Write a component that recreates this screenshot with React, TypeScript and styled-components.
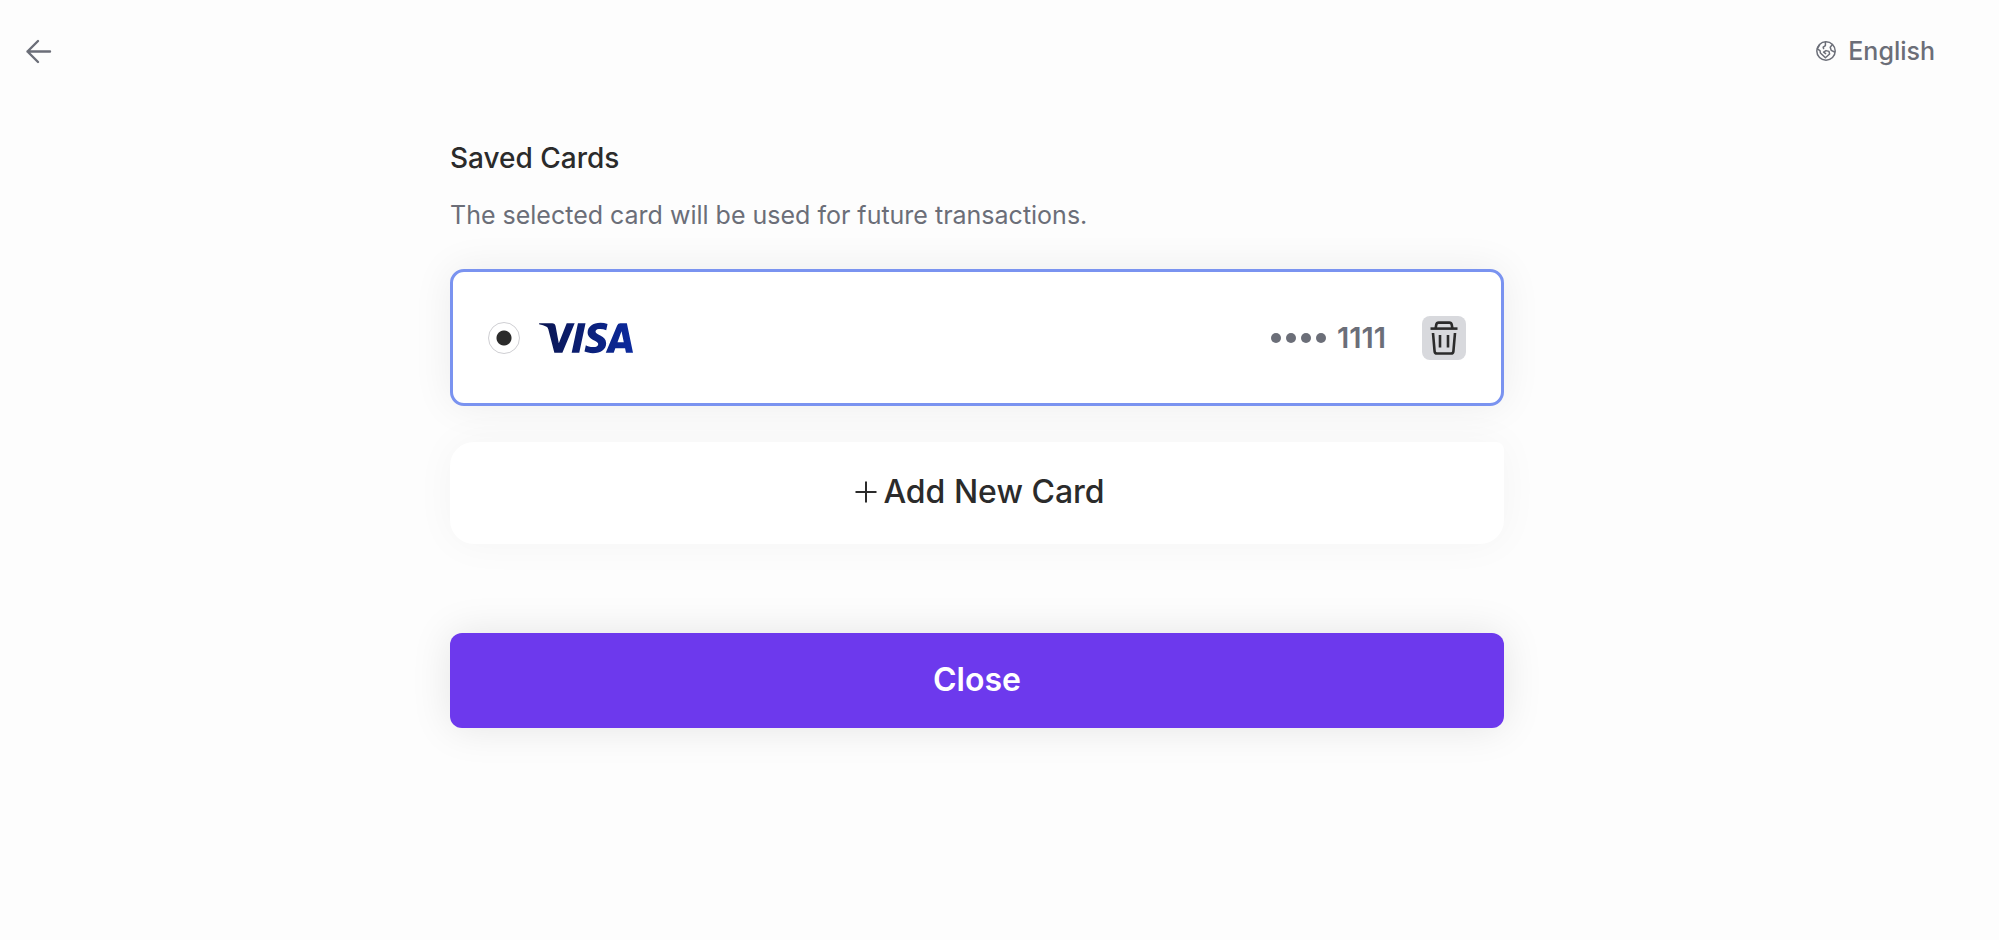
import React, { useState } from "react";
import styled, { createGlobalStyle } from "styled-components";
import { SiVisa } from "react-icons/si";

const GlobalStyle = createGlobalStyle`
  * { box-sizing: border-box; }
  body {
    margin: 0;
    background: #fdfdfd;
    color: #2b2b2b;
    font-family: Inter, "Liberation Sans", sans-serif;
  }
`;

const BaseButton = styled.button`
  margin: 0;
  padding: 0;
  border: 0;
  font-family: inherit;
  cursor: pointer;
`;

const TopBar = styled.header`
  display: flex;
  align-items: center;
  justify-content: space-between;
  height: 101px;
  padding: 0 64px 0 24px;
`;

const PlainButton = styled(BaseButton)`
  display: flex;
  align-items: center;
  gap: 12px;
  background: none;
  color: #6b6e78;
  font-size: 25px;
  font-weight: 500;
  line-height: 28px;
`;

const Content = styled.main`
  display: flex;
  flex-direction: column;
  width: 54%;
  min-width: 320px;
  max-width: 1054px;
  margin: 0 auto;
  padding-top: 41px;
`;

const Page = styled.div`
  min-height: 100vh;
`;

const Body = styled.div`
  display: flex;
  padding-right: 45px;
`;

const Title = styled.h1`
  margin: 0;
  font-size: 28px;
  font-weight: 500;
  line-height: 32px;
`;

const Description = styled.p`
  margin: 25px 0 0;
  color: #6b6e78;
  font-size: 25px;
  line-height: 32px;
`;

const CardRow = styled.div`
  display: flex;
  align-items: center;
  height: 137px;
  margin-top: 38px;
  padding: 0 35px;
  border: 3px solid #7a93f0;
  border-radius: 14px;
  background: #fff;
  box-shadow: 0 0 40px rgba(0, 0, 0, 0.07);
`;

const CardOption = styled.label`
  display: flex;
  flex: 1;
  align-items: center;
  cursor: pointer;
`;

const Radio = styled.input`
  appearance: none;
  width: 32px;
  height: 32px;
  margin: 0 19px 0 0;
  border: 1px solid #cfcfd3;
  border-radius: 50%;
  background: #fff;
  &:checked {
    background: radial-gradient(circle, #2b2b2b 7px, #fff 8px);
  }
`;

const Digits = styled.span`
  display: flex;
  align-items: center;
  gap: 11px;
  margin-left: auto;
  color: #6b6e78;
  font-size: 29px;
  font-weight: 600;
  line-height: 32px;
`;

const Dots = styled.span`
  display: flex;
  gap: 5px;
`;

const Dot = styled.i`
  width: 10px;
  height: 10px;
  border-radius: 50%;
  background: #6b6e78;
`;

const DeleteButton = styled(BaseButton)`
  display: flex;
  align-items: center;
  justify-content: center;
  width: 44px;
  height: 44px;
  margin-left: 36px;
  border-radius: 8px;
  background: #d8d9dd;
`;

const AddButton = styled(BaseButton)`
  display: flex;
  align-items: baseline;
  justify-content: center;
  gap: 6px;
  margin-top: 36px;
  padding: 30px 0 32px 6px;
  border-radius: 24px 8px 24px 24px;
  background: #fff;
  color: #2b2b2b;
  font-size: 32px;
  font-weight: 500;
  line-height: 40px;
  box-shadow: 0 0 40px rgba(0, 0, 0, 0.04);
`;

const CloseButton = styled(BaseButton)`
  height: 95px;
  margin-top: 89px;
  padding-bottom: 2px;
  border-radius: 12px;
  background: #6d39ed;
  color: #fff;
  font-size: 32px;
  font-weight: 600;
  box-shadow: 0 0 40px rgba(0, 0, 0, 0.1);
`;

const BackIcon = () => (
  <svg width="30" height="30" viewBox="0 0 30 30" fill="none" stroke="#6b6e78" strokeWidth="2.4" strokeLinecap="round" strokeLinejoin="round">
    <path d="M26 15.5H3.5M14 5L3.5 15.5L14 26" />
  </svg>
);

const GlobeIcon = () => (
  <svg width="20" height="20" viewBox="0 0 20 20" fill="none" stroke="#6b6e78" strokeWidth="1.5" strokeLinejoin="round" strokeLinecap="round">
    <circle cx="10" cy="10" r="9.2" />
    <path d="M9.4 1V4.6L7.2 6.2L7.6 7.6M1.2 7.8L4 9.6L4.4 12L9.4 16.8L13.6 13L13 10.4L10 9.6L7.6 11.2L9.6 12.6M3.6 3.8L1.6 7.4M16.4 3.6L14.2 6.2L15.2 9.4L18.6 11" />
  </svg>
);

const TrashIcon = () => (
  <svg width="28" height="34" viewBox="0 0 28 34" fill="none" stroke="#2b2b2b" strokeWidth="2.6">
    <path d="M0.5 7.6H27.5" />
    <path d="M5.6 7.4L6.3 3.6Q6.7 1.6 8.7 1.6H19.3Q21.3 1.6 21.7 3.6L22.4 7.4" />
    <path d="M3 12L4.6 30.3Q4.8 32.5 7 32.5H21Q23.2 32.5 23.4 30.3L25 12" />
    <path d="M10 14V26.5M18 14V26.5" />
  </svg>
);

const PlusIcon = () => (
  <svg width="22" height="22" viewBox="0 0 22 22" fill="none" stroke="#2b2b2b" strokeWidth="2">
    <path d="M11 0.5V21.5M0.5 11H21.5" />
  </svg>
);

const VisaLogo = () => (
  <>
    <svg width="0" height="0" aria-hidden="true">
      <linearGradient id="visa-blue" x1="0" x2="1" y1="0" y2="0">
        <stop offset="0" stopColor="#0a1550" />
        <stop offset="1" stopColor="#0c2a9e" />
      </linearGradient>
    </svg>
    <SiVisa size={94} fill="url(#visa-blue)" title="Visa" />
  </>
);

export default function App() {
  const [selected, setSelected] = useState("1111");
  return (
    <Page>
      <GlobalStyle />
      <TopBar>
        <PlainButton type="button" aria-label="Back">
          <BackIcon />
        </PlainButton>
        <PlainButton type="button">
          <GlobeIcon />
          English
        </PlainButton>
      </TopBar>
      <Body>
        <Content>
          <Title>Saved Cards</Title>
          <Description>The selected card will be used for future transactions.</Description>
          <CardRow>
            <CardOption>
              <Radio
                type="radio"
                name="card"
                value="1111"
                checked={selected === "1111"}
                onChange={(e) => setSelected(e.target.value)}
              />
              <VisaLogo />
              <Digits>
                <Dots>
                  <Dot />
                  <Dot />
                  <Dot />
                  <Dot />
                </Dots>
                1111
              </Digits>
            </CardOption>
            <DeleteButton type="button" aria-label="Delete card">
              <TrashIcon />
            </DeleteButton>
          </CardRow>
          <AddButton type="button">
            <PlusIcon />
            Add New Card
          </AddButton>
          <CloseButton type="button">Close</CloseButton>
        </Content>
      </Body>
    </Page>
  );
}
